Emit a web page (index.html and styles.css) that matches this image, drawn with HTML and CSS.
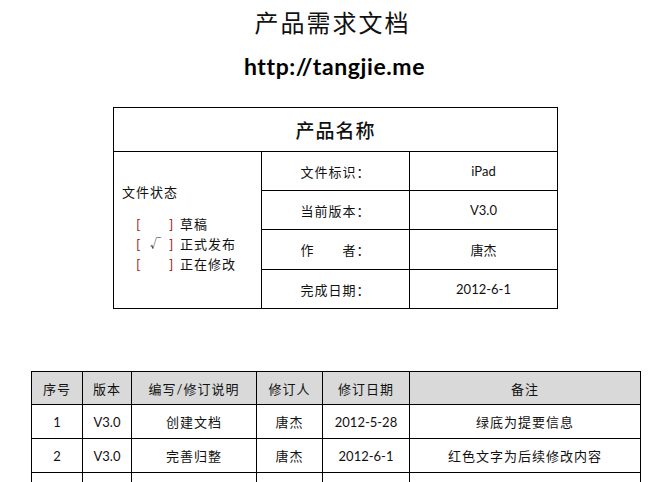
FILE: index.html
```html
<!DOCTYPE html>
<html lang="zh-CN">
<head>
<meta charset="utf-8">
<title>产品需求文档</title>
<link rel="stylesheet" href="styles.css">
</head>
<body>
<div class="page">
  <h1 class="doc-title">产品需求文档</h1>
  <div class="doc-url">http://tangjie.me</div>

  <table class="info">
    <colgroup><col class="c1"><col class="c2"><col class="c3"></colgroup>
    <tr class="info-head"><th colspan="3">产品名称</th></tr>
    <tr class="r">
      <td rowspan="4" class="status">
        <div class="status-label">文件状态</div>
        <div class="status-list">
          <div class="opt"><span class="br">[</span><span class="mark"></span><span class="br">]</span><span class="opt-text">草稿</span></div>
          <div class="opt"><span class="br">[</span><span class="mark">√</span><span class="br">]</span><span class="opt-text">正式发布</span></div>
          <div class="opt"><span class="br">[</span><span class="mark"></span><span class="br">]</span><span class="opt-text">正在修改</span></div>
        </div>
      </td>
      <td class="lbl">文件标识：</td><td class="val">iPad</td>
    </tr>
    <tr class="r"><td class="lbl">当前版本：</td><td class="val">V3.0</td></tr>
    <tr class="r r3"><td class="lbl">作　　者：</td><td class="val">唐杰</td></tr>
    <tr class="r"><td class="lbl">完成日期：</td><td class="val">2012-6-1</td></tr>
  </table>

  <table class="rev">
    <colgroup>
      <col class="k1"><col class="k2"><col class="k3"><col class="k4"><col class="k5"><col class="k6">
    </colgroup>
    <tr class="rev-head">
      <th>序号</th><th>版本</th><th>编写/修订说明</th><th>修订人</th><th>修订日期</th><th>备注</th>
    </tr>
    <tr class="rev-row">
      <td>1</td><td>V3.0</td><td>创建文档</td><td>唐杰</td><td>2012-5-28</td><td>绿底为提要信息</td>
    </tr>
    <tr class="rev-row">
      <td>2</td><td>V3.0</td><td>完善归整</td><td>唐杰</td><td>2012-6-1</td><td>红色文字为后续修改内容</td>
    </tr>
    <tr class="rev-row">
      <td></td><td></td><td></td><td></td><td></td><td></td>
    </tr>
  </table>
</div>
</body>
</html>
```

FILE: styles.css
```css
html, body {
  margin: 0;
  padding: 0;
  background: #ffffff;
}
body {
  font-family: "Lato", "Noto Sans CJK SC", sans-serif;
  color: #111;
}
.page {
  width: 663px;
}
.doc-title {
  margin: 0;
  padding-top: 6px;
  height: 38px;
  line-height: 32px;
  font-size: 24px;
  font-weight: 400;
  letter-spacing: 2px;
  text-align: center;
  font-family: "Noto Sans CJK SC", sans-serif;
  padding-left: 2px;
}
.doc-url {
  height: 48px;
  line-height: 44px;
  font-size: 23px;
  font-weight: 700;
  letter-spacing: 0.6px;
  text-align: center;
  padding-left: 6px;
  color: #000;
}
.info {
  margin-left: 113px;
  margin-top: 15px;
  border-collapse: collapse;
  table-layout: fixed;
  width: 444px;
}
.info td, .info th {
  border: 1px solid #000;
  padding: 0;
  text-align: center;
  font-size: 13px;
}
.c1 { width: 148px; }
.c2 { width: 148px; }
.c3 { width: 148px; }
.info-head th {
  height: 43px;
  font-size: 19px;
  font-weight: 500;
  letter-spacing: 1px;
  font-family: "Noto Sans CJK SC", sans-serif;
}
.info .r td { height: 38px; }
.info .r3 td { height: 39px; }
.info .status {
  text-align: left;
  vertical-align: top;
  padding-left: 8px;
  padding-top: 30px;
  font-family: "Noto Sans CJK SC", sans-serif;
}
.status-label {
  font-size: 13px;
  letter-spacing: 1px;
  line-height: 20px;
}
.status-list {
  margin-top: 11px;
  padding-left: 14px;
}
.opt {
  display: flex;
  align-items: center;
  height: 20px;
  font-size: 13px;
}
.br {
  color: #a40000;
  width: 6px;
}
.mark {
  width: 27px;
  text-align: center;
  font-size: 11px;
}
.opt-text {
  margin-left: 5px;
  letter-spacing: 1px;
}
.lbl {
  font-family: "Noto Sans CJK SC", sans-serif;
  letter-spacing: 1px;
}
.val {
  font-size: 13px;
}
.rev {
  margin-left: 31px;
  margin-top: 62px;
  border-collapse: collapse;
  table-layout: fixed;
  width: 609px;
}
.k1 { width: 51px; }
.k2 { width: 49px; }
.k3 { width: 125px; }
.k4 { width: 66px; }
.k5 { width: 87px; }
.k6 { width: 231px; }
.rev th, .rev td {
  border: 1px solid #000;
  padding: 0;
  text-align: center;
  font-size: 13px;
  font-weight: 400;
}
.rev-head th {
  background: #d9d9d9;
  height: 32px;
  letter-spacing: 1px;
}
.rev-row td {
  height: 33px;
}
.rev-row td:nth-child(3), .rev-row td:nth-child(4), .rev-row td:nth-child(6) {
  letter-spacing: 1px;
}
```
